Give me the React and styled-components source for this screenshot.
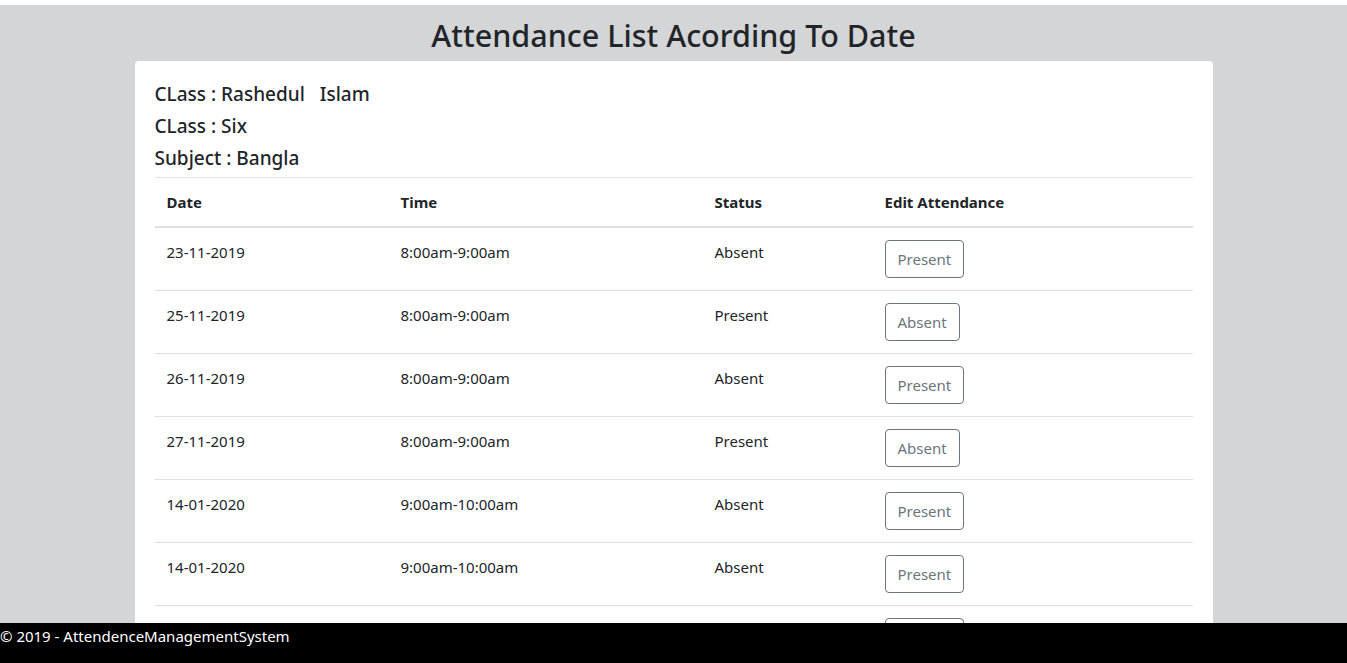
import React from 'react';
import styled, { createGlobalStyle } from 'styled-components';

const GlobalStyle = createGlobalStyle`
  html, body {
    margin: 0;
    padding: 0;
    background-color: #d4d5d7;
  }
  body {
    font-family: "Noto Sans", "Open Sans", sans-serif;
    color: #212529;
  }
`;

const TopStrip = styled.div`
  height: 5px;
  background-color: #fff;
`;

const Main = styled.main`
  padding: 11px 0 80px;
`;

const Title = styled.h2`
  margin: 0 0 7px;
  text-align: center;
  font-size: 30.5px;
  font-weight: 500;
  line-height: 38px;
`;

const Card = styled.div`
  width: 1078px;
  margin: 0 auto;
  background-color: #fff;
  border-radius: 4px;
  padding: 21px 20px 0;
  box-sizing: border-box;
`;

const InfoLine = styled.h5`
  margin: 0 0 8px;
  font-size: 19px;
  font-weight: 500;
  line-height: 24px;
  white-space: pre;
`;

const Divider = styled.hr`
  margin: -1px 0 0;
  border: 0;
  border-top: 1px solid #e3e3e3;
`;

const Table = styled.table`
  width: 100%;
  table-layout: fixed;
  border-collapse: collapse;
  font-size: 15px;
  line-height: 24px;
`;

const Th = styled.th`
  text-align: left;
  font-weight: 700;
  padding: 12px;
  border-bottom: 2px solid #dee2e6;
  width: ${(p) => p.w}px;
  box-sizing: border-box;
`;

const Td = styled.td`
  padding: 12px;
  vertical-align: top;
  border-top: 1px solid #dee2e6;
`;

const Row = styled.tr`
  &:first-child td {
    border-top: 0;
  }
`;

const OutlineButton = styled.button`
  font-family: inherit;
  font-size: 15px;
  line-height: 24px;
  padding: 6px 12px;
  color: #6c757d;
  background: transparent;
  border: 1px solid #6c757d;
  border-radius: 4px;
  cursor: pointer;
`;

const Footer = styled.footer`
  position: fixed;
  left: 0;
  right: 0;
  bottom: 0;
  height: 40px;
  background-color: #000;
  color: #fff;
  font-size: 15px;
  line-height: 26px;
`;

const records = [
  { date: '23-11-2019', time: '8:00am-9:00am', status: 'Absent' },
  { date: '25-11-2019', time: '8:00am-9:00am', status: 'Present' },
  { date: '26-11-2019', time: '8:00am-9:00am', status: 'Absent' },
  { date: '27-11-2019', time: '8:00am-9:00am', status: 'Present' },
  { date: '14-01-2020', time: '9:00am-10:00am', status: 'Absent' },
  { date: '14-01-2020', time: '9:00am-10:00am', status: 'Absent' },
  { date: '15-01-2020', time: '9:00am-10:00am', status: 'Absent' },
];

const App = () => {
  return (
    <>
      <GlobalStyle />
      <TopStrip />
      <Main>
        <Title>Attendance List Acording To Date</Title>
        <Card>
          <InfoLine>{'CLass : Rashedul   Islam'}</InfoLine>
          <InfoLine>CLass : Six</InfoLine>
          <InfoLine>Subject : Bangla</InfoLine>
          <Divider />
          <Table>
            <thead>
              <tr>
                <Th w={234}>Date</Th>
                <Th w={314}>Time</Th>
                <Th w={170}>Status</Th>
                <Th w={320}>Edit Attendance</Th>
              </tr>
            </thead>
            <tbody>
              {records.map((r, i) => (
                <Row key={i}>
                  <Td>{r.date}</Td>
                  <Td>{r.time}</Td>
                  <Td>{r.status}</Td>
                  <Td>
                    <OutlineButton>
                      {r.status === 'Absent' ? 'Present' : 'Absent'}
                    </OutlineButton>
                  </Td>
                </Row>
              ))}
            </tbody>
          </Table>
        </Card>
      </Main>
      <Footer>&copy; 2019 - AttendenceManagementSystem</Footer>
    </>
  );
};

export default App;
